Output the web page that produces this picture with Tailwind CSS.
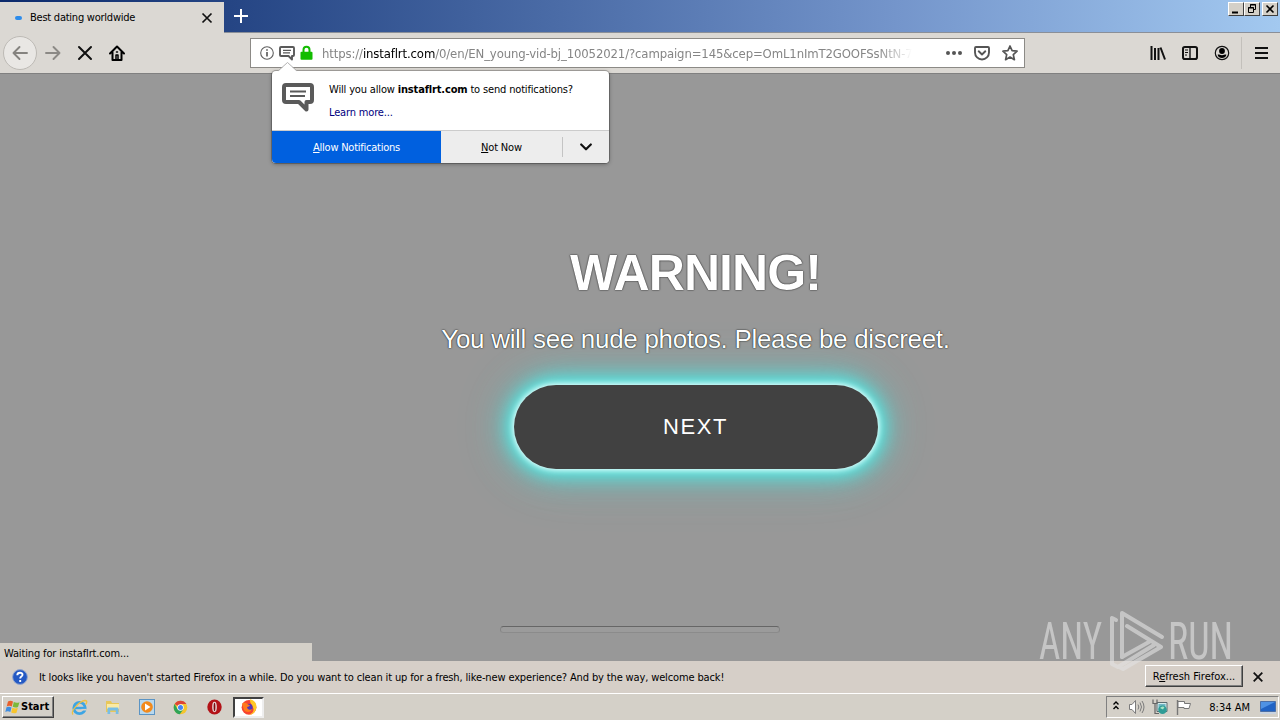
<!DOCTYPE html>
<html lang="en">
<head>
  <meta charset="UTF-8">
  <title>Best dating worldwide</title>
  <script src="https://cdn.jsdelivr.net/npm/@tailwindcss/browser@4"></script>
</head>
<body class="w-[1280px] h-[720px] overflow-hidden bg-[#989898] text-black text-[11px] leading-[14px] font-['DejaVu_Sans_Condensed','DejaVu_Sans',sans-serif] [font-stretch:condensed]">
<div class="relative flex flex-col w-[1280px] h-[720px]">

  <!-- Title bar with tabs -->
  <header class="h-[33px] flex items-start bg-linear-to-r from-[#0c2a6c] from-0% via-[#7495cb] via-70% to-[#a3c9f0] border-b border-[#8a8f98]">
    <div class="mt-[2px] w-[224px] h-[31px] bg-[#dbd8d3] flex items-center pl-[15px] pr-[11px]">
      <span class="w-[7px] h-[4px] rounded-full bg-[#2d8ceb] mr-[8px]"></span>
      <span class="flex-1 whitespace-nowrap tracking-[-0.24px]">Best dating worldwide</span>
      <svg class="w-[12px] h-[12px]" viewBox="0 0 12 12" stroke="#111" stroke-width="1.7"><path d="M1.5 1.5l9 9M10.500 1.500l-9 9"/></svg>
    </div>
    <svg class="w-[14px] h-[14px] ml-[10px] mt-[9px]" viewBox="0 0 14 14" stroke="#fff" stroke-width="2"><path d="M7 0v14M0 7h14"/></svg>
    <!-- Window buttons -->
    <div class="ml-auto mr-[2px] mt-[2px] flex">
      <span class="w-[16px] h-[14px] bg-[#d4d0c8] border border-t-white border-l-white border-b-[#404040] border-r-[#404040]"><svg class="w-[14px] h-[12px]" viewBox="0 0 14 12"><path d="M3 8.500h6v2H3z"/></svg></span>
      <span class="w-[16px] h-[14px] bg-[#d4d0c8] border border-t-white border-l-white border-b-[#404040] border-r-[#404040]"><svg class="w-[14px] h-[12px]" viewBox="0 0 14 12" fill="none" stroke="#000"><path d="M5.500 4V1.500h5v5H9M5 2h6M3.500 4.500h5v5h-5zM3 5h6"/></svg></span>
      <span class="w-[16px] h-[14px] ml-[2px] bg-[#d4d0c8] border border-t-white border-l-white border-b-[#404040] border-r-[#404040]"><svg class="w-[14px] h-[12px]" viewBox="0 0 14 12" stroke="#000" stroke-width="1.6"><path d="M3.500 2.500l7 7M10.500 2.500l-7 7"/></svg></span>
    </div>
  </header>

  <!-- Navigation toolbar -->
  <nav class="h-[41px] flex items-center bg-[#dbd8d3] border-b border-[#808080]">
    <span class="ml-[3px] w-[34px] h-[34px] rounded-full border border-[#bdbab5] bg-[#e9e7e4] flex items-center justify-center">
      <svg class="w-[16px] h-[16px]" viewBox="0 0 16 16" fill="none" stroke="#85837f" stroke-width="1.900" stroke-linecap="round" stroke-linejoin="round"><path d="M15 8H1.500M7.500 2l-6 6 6 6"/></svg>
    </span>
    <svg class="ml-[8px] w-[16px] h-[16px]" viewBox="0 0 16 16" fill="none" stroke="#8b8985" stroke-width="1.900" stroke-linecap="round" stroke-linejoin="round"><path d="M1 8h13.500M8.500 2l6 6-6 6"/></svg>
    <svg class="ml-[16px] w-[16px] h-[16px]" viewBox="0 0 16 16" stroke="#111" stroke-width="2" stroke-linecap="round"><path d="M2 2l12 12M14 2L2 14"/></svg>
    <svg class="ml-[16px] w-[16px] h-[16px]" viewBox="0 0 16 16" fill="none" stroke="#000" stroke-width="2" stroke-linecap="round" stroke-linejoin="round"><path d="M1 8.500L8 1.500l7 7M3.500 7.500V15h9V7.500"/><path d="M7 14V10h2v4M7.500 7h1" stroke-width="1.500"/></svg>

    <!-- URL bar -->
    <div class="ml-[125px] w-[775px] h-[30px] bg-white border border-[#8c8a86] flex items-center">
      <svg class="ml-[9px] w-[14px] h-[14px]" viewBox="0 0 14 14" fill="none" stroke="#5f5f5f"><circle cx="7" cy="7" r="6.300" stroke-width="1.100"/><path d="M7 6v4.500M7 3.200v1.600" stroke-width="1.700"/></svg>
      <svg class="ml-[5px] w-[16px] h-[16px]" viewBox="0 0 16 16" fill="none" stroke="#5a5a5a" stroke-width="1.900" stroke-linejoin="round"><path d="M2 2h12a1 1 0 0 1 1 1v7a1 1 0 0 1-1 1h-1v3.500L9.500 11H2a1 1 0 0 1-1-1V3a1 1 0 0 1 1-1z"/><path d="M4 5.300h8M4 7.900h7" stroke-width="1.200"/></svg>
      <svg class="ml-[5px] w-[13px] h-[16px]" viewBox="0 0 13 16"><path d="M3.500 8V4.800a3 3 0 0 1 6 0V8" fill="none" stroke="#12bc00" stroke-width="2"/><rect x=".5" y="6.800" width="12" height="8" rx="1" fill="#12bc00"/></svg>
      <span class="ml-[9px] pt-[2px] w-[600px] whitespace-nowrap text-[13px] leading-[18px] tracking-[-0.13px] text-[#858585] mask-r-from-[555px] mask-r-to-[590px]">https://<span class="text-black">instaflrt.com</span>/0/en/EN_young-vid-bj_10052021/?campaign=145&amp;cep=OmL1nImT2GOOFSsNtN-7</span>
      <svg class="ml-auto w-[16px] h-[6px]" viewBox="0 0 16 6" fill="#555"><circle cx="2" cy="3" r="2"/><circle cx="8" cy="3" r="2"/><circle cx="14" cy="3" r="2"/></svg>
      <svg class="ml-[12px] w-[16px] h-[16px]" viewBox="0 0 16 16" fill="none" stroke="#555" stroke-width="1.900" stroke-linecap="round" stroke-linejoin="round"><path d="M2 2h12a1 1 0 0 1 1 1v4.500a7 7 0 0 1-14 0V3a1 1 0 0 1 1-1z"/><path d="M4.700 6.300L8 9.500l3.300-3.200"/></svg>
      <svg class="ml-[12px] mr-[6px] w-[16px] h-[16px]" viewBox="0 0 16 16" fill="none" stroke="#555" stroke-width="1.700" stroke-linejoin="round"><path d="M8 1l2.100 4.700 5 .5-3.800 3.400 1.100 5.100L8 12.100l-4.400 2.600 1.100-5.100L.9 6.200l5-.5z"/></svg>
    </div>

    <div class="ml-auto flex items-center">
      <svg class="w-[16px] h-[14px]" viewBox="0 0 16 14" stroke="#111" stroke-width="2"><path d="M1.500 0v14M5 2v12M8.500 2v12M10.500 1.500l4.500 12"/></svg>
      <svg class="ml-[16px] w-[16px] h-[14px]" viewBox="0 0 16 14" fill="none" stroke="#111"><rect x="1" y="1" width="14" height="12" rx="1.800" stroke-width="2"/><path d="M8 1v12" stroke-width="1.400"/><path d="M3 4h3M3 6.500h3M3 9h2"/></svg>
      <svg class="ml-[16px] w-[16px] h-[16px]" viewBox="0 0 16 16"><circle cx="8" cy="8" r="6.700" fill="none" stroke="#111" stroke-width="1.200"/><circle cx="8" cy="6" r="2.900"/><path d="M3.600 9.700C4.800 9.200 6 10.200 8 10.200s3.200-1 4.400-.5C12 12 10 13 8 13S4 12 3.600 9.700z"/></svg>
      <span class="ml-[11px] w-px h-[32px] bg-[#c3c0bb]"></span>
      <svg class="ml-[13px] mr-[12px] w-[13px] h-[12px]" viewBox="0 0 13 12" stroke="#111" stroke-width="2"><path d="M0 1h13M0 6h13M0 11h13"/></svg>
    </div>
  </nav>

  <!-- Page -->
  <main class="flex-1 relative flex flex-col bg-[#989898] font-['Liberation_Sans',Arial,sans-serif] text-white">
    <div class="ml-[111px] flex flex-col items-center pt-[169px]">
      <h1 class="text-[50px] leading-[60px] font-bold tracking-[-0.9px] whitespace-nowrap [text-shadow:0_0_1px_#000,0_0_2px_rgba(0,0,0,0.6)]">WARNING!</h1>
      <p class="mt-[20px] text-[26px] leading-[32px] tracking-[-0.31px] whitespace-nowrap [text-shadow:0_0_1px_#000,0_0_2px_rgba(0,0,0,0.6)]">You will see nude photos. Please be discreet.</p>
      <button class="mt-[30px] w-[364px] h-[84px] rounded-full bg-[#414141] text-[22px] tracking-[1.6px] shadow-[0_0_6px_1px_#fff,0_0_16px_5px_#55efe9,0_0_32px_8px_rgba(80,216,212,0.8),0_0_60px_0_rgba(90,220,215,0.3)]">NEXT</button>
    </div>
    <div class="mt-auto mb-[28px] mx-auto w-[280px] h-[7px] rounded-[4px] border-t border-t-[#666] border-b border-b-[#8b8b8b] border-x border-x-[#858585] bg-[#9b9b9b]"></div>
    <div class="absolute left-0 bottom-0 w-[312px] h-[18px] bg-[#d4d0c8] text-black pl-[4px] pt-[4px] leading-[13px] tracking-[-0.14px] font-['DejaVu_Sans_Condensed','DejaVu_Sans',sans-serif]">Waiting for instaflrt.com...</div>
  </main>

  <!-- Notification bar -->
  <section class="h-[32px] flex items-center bg-[#d6cfc8]">
    <svg class="ml-[12px] w-[16px] h-[16px]" viewBox="0 0 16 16"><circle cx="8" cy="8" r="7.400" fill="#2459c4" stroke="#93a6cd"/><path d="M5.300 6.200C5.300 2.800 10.800 3 10.500 6c-.2 1.600-2.300 1.700-2.300 3.500M8.200 11v2" fill="none" stroke="#fff" stroke-width="1.900"/></svg>
    <span class="ml-[11px] pt-[2px] whitespace-nowrap tracking-[-0.137px]">It looks like you haven't started Firefox in a while. Do you want to clean it up for a fresh, like-new experience? And by the way, welcome back!</span>
    <span class="ml-auto mb-[2px] pt-[2px] w-[98px] h-[22px] border border-t-white border-l-white border-b-[#404040] border-r-[#404040] shadow-[inset_-1px_-1px_0_#808080] flex items-center justify-center whitespace-nowrap"><span>R<u>e</u>fresh Firefox...</span></span>
    <svg class="ml-[10px] mr-[17px] w-[10px] h-[10px]" viewBox="0 0 10 10" stroke="#111" stroke-width="1.800"><path d="M.7.7l8.600 8.600M9.300.7L.7 9.300"/></svg>
  </section>

  <!-- Taskbar -->
  <footer class="h-[27px] border-t border-white bg-[#d4d0c8] flex items-center">
    <div class="ml-[2px] w-[52px] h-[22px] border border-t-white border-l-white border-b-[#404040] border-r-[#404040] shadow-[inset_-1px_-1px_0_#808080] flex items-center pl-[2px] font-bold">
      <svg class="w-[15px] h-[15px] mr-px" viewBox="0 0 15 15"><path d="M3 1.500Q5.500 0 8 1.600L6.800 6.500Q4.300 5.200 1.700 6.400z" fill="#e8602c"/><path d="M8.800 2Q11.500 3.500 14.500 2.200L13 7Q10.500 8.300 7.700 6.800z" fill="#7cb83a"/><path d="M1.500 7.200Q4 6 6.500 7.400L5.300 12Q2.800 10.700.3 12z" fill="#3f8de0"/><path d="M7.400 7.800Q10 9 12.800 8L11.500 12.800Q8.800 14 6.200 12.500z" fill="#f8c52c"/></svg>
      Start
    </div>
    <svg class="ml-[17px] w-[17px] h-[17px]" viewBox="0 0 17 17" fill="none"><circle cx="8.500" cy="9" r="5.700" stroke="#3da5e4" stroke-width="2.800"/><path d="M4 9h9.500" stroke="#3da5e4" stroke-width="2.400"/><path d="M10.500 10.700h5" stroke="#d4d0c8" stroke-width="1.600"/><path d="M2 15.500C-1 12 9 2 14 1.500c3 0 1.500 3 .5 4" stroke="#edc044" stroke-width="1.300"/></svg>
    <svg class="ml-[17px] w-[16px] h-[16px]" viewBox="0 0 16 16"><path d="M1 2h5l1 2h7v9H1z" fill="#e8c75a"/><path d="M2 5h12v5H2z" fill="#fbeaa4"/><path d="M2.500 15V9.500q0-1 1-1h9q1 0 1 1V15h-2.700v-3.500H5.200V15z" fill="#78bee6"/></svg>
    <svg class="ml-[18px] w-[16px] h-[16px]" viewBox="0 0 16 16"><rect x=".5" y=".5" width="15" height="15" fill="#b8d8ee" stroke="#5b94c4"/><circle cx="8" cy="8" r="5.800" fill="#f28a1c"/><path d="M6 4.500v7L11.500 8z" fill="#fff"/></svg>
    <svg class="ml-[18px] w-[15px] h-[15px]" viewBox="0 0 15 15"><circle cx="7.500" cy="7.500" r="6.800" fill="#f4c52e"/><path d="M7.500 7.500L1.600 4.100A6.800 6.800 0 0 1 13.400 4.100H7.500z" fill="#dc4437"/><path d="M1.600 4.100A6.800 6.800 0 0 0 6.800 14.300L10.400 9.200 7.500 7.500 4.600 9.200z" fill="#2fa457"/><circle cx="7.500" cy="7.500" r="3.200" fill="#fff"/><circle cx="7.500" cy="7.500" r="2.500" fill="#4285f4"/></svg>
    <svg class="ml-[19px] w-[15px] h-[16px]" viewBox="0 0 15 16"><ellipse cx="7.500" cy="8" rx="7.200" ry="7.600" fill="#b31217"/><ellipse cx="7.500" cy="8" rx="2.300" ry="5.200" fill="#e9dcdc"/><ellipse cx="7.500" cy="8" rx=".9" ry="4.200" fill="#7d0b0f"/></svg>
    <div class="ml-[11px] w-[31px] h-[21px] bg-white border-2 border-t-[#404040] border-l-[#404040] border-b-[#eee] border-r-[#eee] flex items-center justify-center">
      <svg class="w-[16px] h-[16px]" viewBox="0 0 16 16"><circle cx="8" cy="8.300" r="7.400" fill="#f8442f"/><path d="M9 .2c5 1 7 5 6.300 9C14.500 13.500 11 15.800 8 15.700c3-1 5-3 4.500-6C12 6.500 8.500 4 9 .2z" fill="#ffc926"/><circle cx="8" cy="8.400" r="3.600" fill="#5338b8"/><path d="M1 4.500C3 3.200 6 4 7 5.500l2 .8c-.5 1.500-2 1.200-3 2 .5 2.500 3 3 5 1.700-.5 3.500-6 4-8 1z" fill="#ff7a1c"/></svg>
    </div>
    <!-- Tray -->
    <div class="ml-auto mr-[1px] w-[173px] h-[22px] border border-t-[#808080] border-l-[#808080] border-b-white border-r-white flex items-center">
      <svg class="ml-[6px] mb-[3px] w-[6px] h-[9px]" viewBox="0 0 6 9" fill="none" stroke="#000" stroke-width="1.400"><path d="M.5 3.500L3 1l2.500 2.500M.5 8L3 5.500 5.500 8"/></svg>
      <svg class="ml-[9px] w-[17px] h-[16px]" viewBox="0 0 17 16" fill="none" stroke="#7b7b7b"><path d="M1.500 5.500h2.500l3.500-4v13l-3.500-4H1.500z" fill="#fff"/><path d="M10 5.500q1.700 2.500 0 5M12 3.500q3 4.500 0 9M14 2q4 6 0 12"/></svg>
      <svg class="ml-[7px] w-[16px] h-[16px]" viewBox="0 0 16 16" fill="none"><path d="M5 3.500h10v9H5z" fill="#d6ecec" stroke="#5b6b70"/><path d="M6.500 5h7v5h-7z" fill="#6fb7c4"/><path d="M1 .5v4h4v-4M3 4.500v10h4" stroke="#666" stroke-width="1.200"/><circle cx="10.500" cy="10.800" r="4.300" fill="#2f9c96"/><path d="M8 9q2-2.500 4.500-1L11 10.500z" fill="#a8e3c4"/></svg>
      <svg class="ml-[8px] w-[16px] h-[15px]" viewBox="0 0 16 15" stroke="#777"><path d="M1.500 0v15" stroke-width="1.400"/><path d="M2 1.500h6.500v2h6l-1.500 5H8V7.500H2z" fill="#fff"/></svg>
      <span class="ml-auto pt-px whitespace-nowrap">8:34 AM</span>
      <svg class="ml-[10px] mr-[2px] w-[16px] h-[13px]" viewBox="0 0 16 13"><path d="M.5.500h15v10H.5z" fill="#2163c4" stroke="#4c6fa6"/><path d="M1 1h14L1 8z" fill="#4f92e4"/><path d="M0 11h16v2H0z" fill="#c9d3e0"/></svg>
    </div>
  </footer>

  <!-- Permission popup -->
  <div class="absolute left-[272px] top-[71px] w-[337px] h-[92px] rounded-[4px] bg-white shadow-[0_0_0_1px_rgba(0,0,0,0.22),0_1px_4px_rgba(0,0,0,0.35)]">
    <svg class="absolute left-[6px] -top-[9px] w-[20px] h-[10px]" viewBox="0 0 20 10"><path d="M0 9.500L9.500.5 19 9.500V10H0z" fill="#fff"/><path d="M0 9L9.500.5 19 9" fill="none" stroke="#aaa" stroke-width=".9"/></svg>
    <div class="h-full rounded-[4px] overflow-hidden flex flex-col tracking-[-0.16px]">
      <div class="h-[59px] flex">
        <svg class="ml-[10px] mt-[11px] w-[32px] h-[32px]" viewBox="0 0 32 32" fill="none" stroke="#5a5a5a" stroke-width="4" stroke-linejoin="round"><path d="M4 3h24a2 2 0 0 1 2 2v13a2 2 0 0 1-2 2h-3.500v7.500L17 20H4a2 2 0 0 1-2-2V5a2 2 0 0 1 2-2z"/><path d="M8 9.500h16M8 14h15" stroke-width="2"/></svg>
        <div class="ml-[15px] pt-[12px] whitespace-nowrap">
          <p>Will you allow <b>instaflrt.com</b> to send notifications?</p>
          <p class="mt-[9px] text-[#000080]">Learn more...</p>
        </div>
      </div>
      <div class="h-[33px] flex border-t border-[#ccc] bg-[#ededed]">
        <span class="w-[169px] pt-px bg-[#0060df] text-white tracking-[-0.24px] flex items-center justify-center"><span><u>A</u>llow Notifications</span></span>
        <span class="w-[121px] pt-px flex items-center justify-center"><span><u>N</u>ot Now</span></span>
        <span class="w-px h-[20px] my-auto bg-[#c4c4c4]"></span>
        <svg class="m-auto w-[12px] h-[8px]" viewBox="0 0 12 8" fill="none" stroke="#111" stroke-width="2.200" stroke-linecap="round" stroke-linejoin="round"><path d="M1.200 1.500L6 6.300l4.800-4.800"/></svg>
      </div>
    </div>
  </div>

  <!-- Watermark -->
  <svg class="absolute left-[1030px] top-[604px] w-[210px] h-[72px]" viewBox="0 0 210 72" opacity=".62">
    <g fill="#e2e2e2" font-family="Roboto" font-size="51" font-weight="400">
      <text x="9" y="55" textLength="63" lengthAdjust="spacingAndGlyphs">ANY</text>
      <text x="138" y="55" textLength="65" lengthAdjust="spacingAndGlyphs">RUN</text>
    </g>
    <g fill="none" stroke="#e2e2e2" stroke-width="4" stroke-linejoin="round" stroke-linecap="round">
      <path d="M86 16L82 14V60L88 63L124 41"/>
      <path d="M92 53V9L132 33"/>
      <path d="M97 22L131 43L93 65L91 64M92 53L119 38"/>
    </g>
  </svg>
</div>
</body>
</html>
